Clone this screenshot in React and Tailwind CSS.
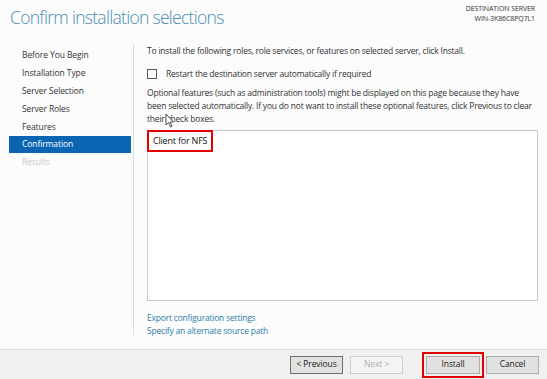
export default function App() {
  const steps = ["Before You Begin", "Installation Type", "Server Selection", "Server Roles", "Features"];

  return (
    <div className="w-[547px] h-[379px] bg-[#fcfcfc] flex flex-col overflow-hidden text-[#1e1e1e]" style={{ fontFamily: '"Open Sans", "Noto Sans", sans-serif' }}>
      {/* header */}
      <div className="flex justify-between h-[40px] pl-[10px] pr-[12px]">
        <h1 className="text-[17.5px] font-light text-[#4a8db5] leading-none pt-[9px] tracking-[-0.7px]">Confirm installation selections</h1>
        <div className="text-right text-[7px] leading-[10px] pt-[4px] text-[#333] tracking-[-0.1px]">
          <div>DESTINATION SERVER</div>
          <div>WIN-3K86C8PQ7L1</div>
        </div>
      </div>

      <div className="flex flex-1 min-h-0">
        {/* nav */}
        <div className="w-[133px] pl-[9px] pt-[6px] text-[8.5px] text-[#333] tracking-[-0.1px]">
          {steps.map((s) => (
            <div key={s} className="h-[18px] flex items-center pl-[13px]">{s}</div>
          ))}
          <div className="h-[17px] w-[122px] flex items-center pl-[13px] bg-[#0b65b3] text-white">Confirmation</div>
          <div className="h-[18px] flex items-center pl-[13px] text-[#c8c8c8]">Results</div>
        </div>
        <div className="w-px bg-[#dcdcdc] mt-[4px] mb-[14px]" />

        {/* content */}
        <div className="flex-1 pl-[13px] pr-[9px] pt-[5px] text-[8.5px] text-[#333] tracking-[-0.2px]">
          <p className="leading-[12px]">To install the following roles, role services, or features on selected server, click Install.</p>
          <label className="flex items-center gap-[9px] mt-[11px]">
            <span className="w-[10px] h-[10px] border border-[#555] bg-white" />
            <span>Restart the destination server automatically if required</span>
          </label>
          <p className="leading-[13px] mt-[5px] relative">
            Optional features (such as administration tools) might be displayed on this page because they have been selected automatically. If you do not want to install these optional features, click Previous to clear their check boxes.
            <svg className="absolute left-[18px] top-[27px]" width="10" height="15" viewBox="0 0 10 15">
              <path d="M1 1 L1 12 L3.5 9.5 L5.5 14 L7 13.3 L5 9 L8.5 9 Z" fill="white" stroke="#222" strokeWidth="0.8" />
            </svg>
          </p>
          <div className="mt-[5px] h-[171px] border border-[#c8c8c8] bg-white relative">
            <div className="absolute -left-px -top-px border-2 border-[#e00000] px-[4px] h-[22px] flex items-center text-[9px] text-[#111]">Client for NFS</div>
          </div>
          <div className="mt-[10px] text-[#2d7ea8] leading-[13px]">
            <div>Export configuration settings</div>
            <div>Specify an alternate source path</div>
          </div>
        </div>
      </div>

      {/* footer */}
      <div className="h-[30px] border-t border-[#dfdfdf] bg-[#f0f0f0] flex items-center justify-end pr-[8px] text-[8.5px] tracking-[-0.1px]">
        <button className="w-[53px] h-[18px] border border-[#707070] bg-[#e1e1e1] text-[#222]">&lt; Previous</button>
        <button className="w-[53px] h-[18px] ml-[7px] border border-[#d0d0d0] bg-[#f4f4f4] text-[#b0b0b0]">Next &gt;</button>
        <div className="ml-[19px] border-2 border-[#e00000] p-[2px]">
          <button className="w-[54px] h-[18px] border border-[#adadad] bg-[#e1e1e1] text-[#222] block">Install</button>
        </div>
        <button className="w-[53px] h-[18px] ml-[2px] border border-[#adadad] bg-[#e1e1e1] text-[#222]">Cancel</button>
      </div>
    </div>
  );
}
